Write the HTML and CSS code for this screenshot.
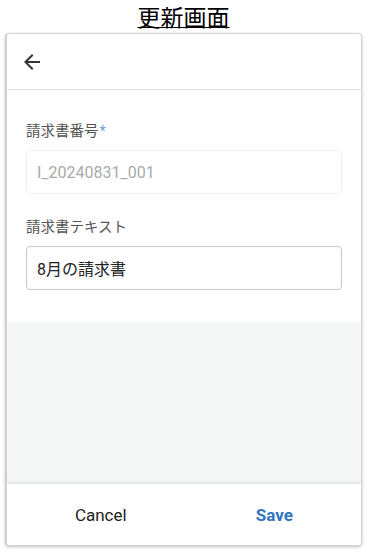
FILE: index.html
```html
<!DOCTYPE html>
<html lang="ja">
<head>
<meta charset="utf-8">
<link rel="stylesheet" href="styles.css">
</head>
<body>
<h1 class="title">更新画面</h1>
<div class="card">
  <div class="header">
    <svg class="back" width="24" height="24" viewBox="0 0 24 24"><path d="M20 11H7.83l5.59-5.59L12 4l-8 8 8 8 1.41-1.41L7.83 13H20v-2z" fill="#333"/></svg>
  </div>
  <div class="body">
    <div class="field">
      <label class="label">請求書番号<span class="req">*</span></label>
      <div class="input disabled">I_20240831_001</div>
    </div>
    <div class="field">
      <label class="label">請求書テキスト</label>
      <div class="input">8月の請求書</div>
    </div>
  </div>
  <div class="spacer"></div>
  <div class="footer">
    <button class="btn cancel">Cancel</button>
    <button class="btn save">Save</button>
  </div>
</div>
</body>
</html>
```
FILE: styles.css
```css
* { box-sizing: border-box; }
html, body { margin: 0; padding: 0; background: #fff; }
body {
  width: 367px;
  height: 551px;
  font-family: Roboto, "Noto Sans CJK JP", sans-serif;
  display: flex;
  flex-direction: column;
  align-items: center;
}
.title {
  margin: 0;
  height: 33px;
  padding-top: 1px;
  font-family: "Noto Sans CJK JP", sans-serif;
  font-weight: 400;
  font-size: 23px;
  line-height: 31px;
  text-decoration: underline;
  text-underline-offset: 1px;
  text-decoration-thickness: 1px;
  color: #000;
}
.card {
  width: 357px;
  height: 513px;
  border: 1px solid #d4d4d4;
  border-left: 2px solid #cfcfcf;
  border-radius: 4px;
  box-shadow: 0 1px 3px rgba(0,0,0,0.25);
  display: flex;
  flex-direction: column;
  overflow: hidden;
  background: #fff;
}
.header {
  height: 56px;
  border-bottom: 1px solid #e2e2e2;
  display: flex;
  align-items: center;
  padding-left: 13px;
  flex-shrink: 0;
}
.back { display: block; }
.body {
  padding: 34px 19px 32px 19px;
  display: flex;
  flex-direction: column;
  gap: 26px;
  flex-shrink: 0;
}
.field { display: flex; flex-direction: column; gap: 10px; }
.label {
  font-size: 14.5px;
  line-height: 16px;
  color: #555;
  font-family: Roboto, "Noto Sans CJK JP", sans-serif;
}
.req { color: #6a9be0; margin-left: 1px; }
.input {
  height: 44px;
  border: 1px solid #c8c8c8;
  border-radius: 4px;
  padding: 0 10px;
  display: flex;
  align-items: center;
  font-size: 16px;
  color: #222;
}
.input.disabled {
  border-color: #eeeeee;
  color: #aaa;
}
.spacer {
  flex: 1;
  background: #f6f7f7;
}
.footer {
  height: 61px;
  flex-shrink: 0;
  display: flex;
  padding-left: 7px;
  box-shadow: 0 -2px 4px rgba(0,0,0,0.08);
  background: #fff;
  position: relative;
}
.btn {
  flex: 1;
  border: none;
  background: none;
  font-family: Roboto, sans-serif;
  font-size: 17px;
  padding: 0;
}
.cancel { color: #222; }
.save { color: #2f74c0; font-weight: 700; }
```
